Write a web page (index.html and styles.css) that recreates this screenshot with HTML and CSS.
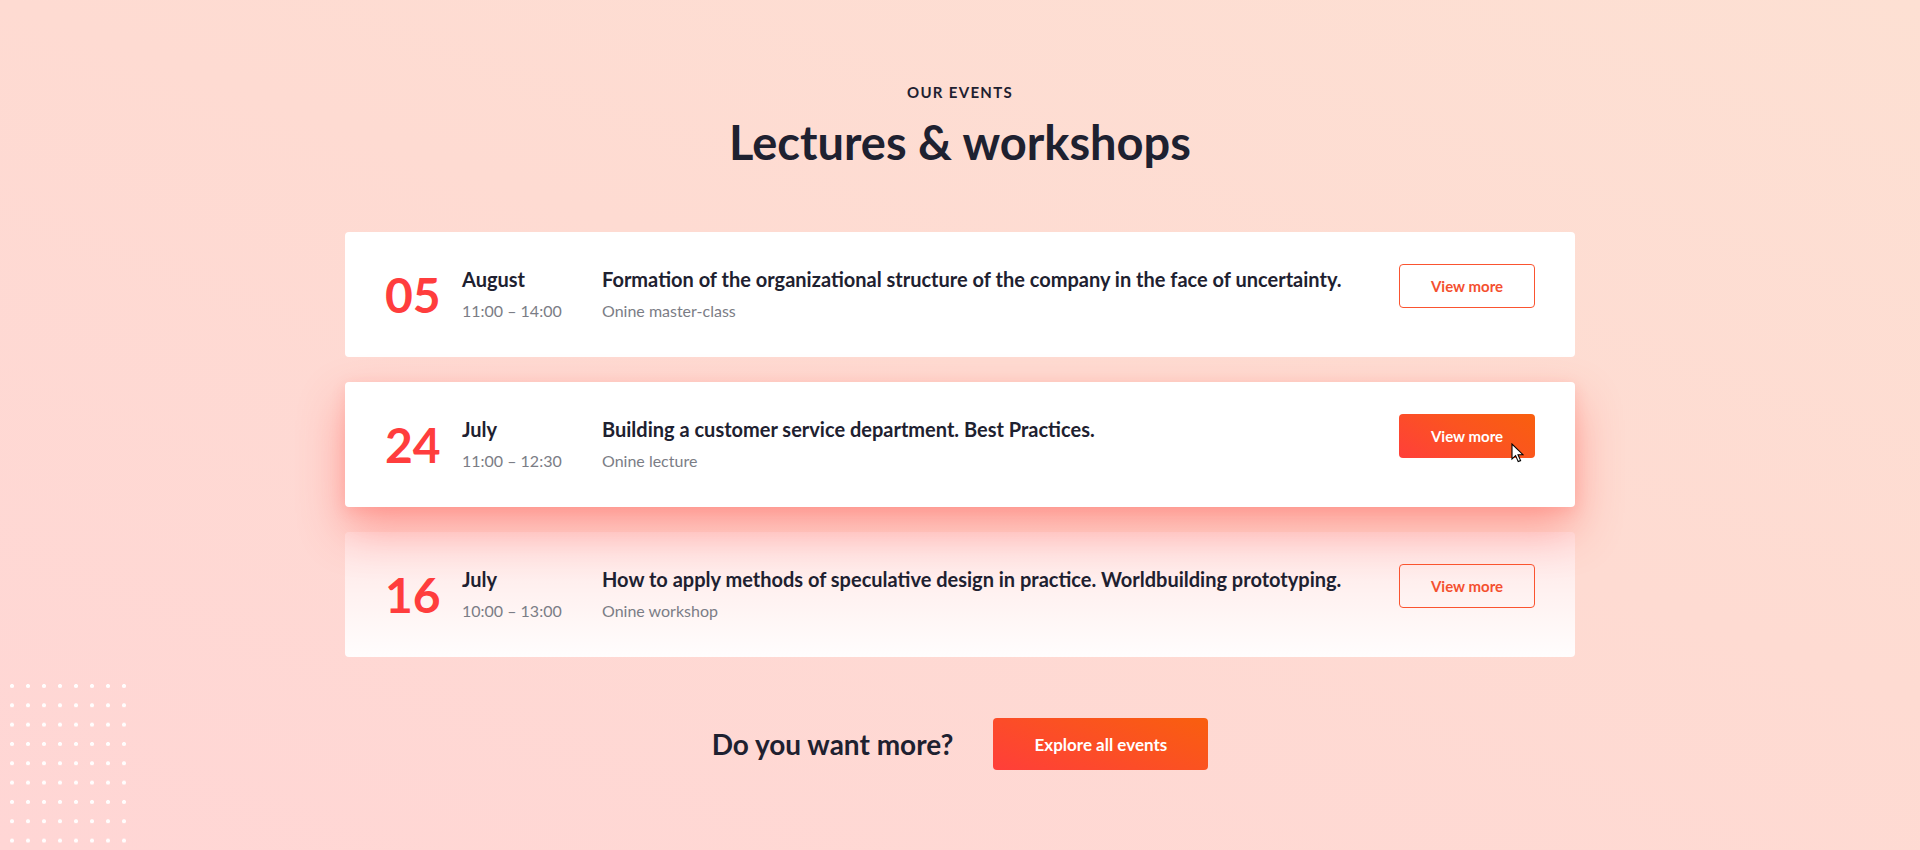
FILE: index.html
```html
<!DOCTYPE html>
<html lang="en">
<head>
<meta charset="utf-8">
<title>Lectures &amp; workshops</title>
<link rel="stylesheet" href="styles.css">
</head>
<body>
<div class="page">
  <div class="dots" aria-hidden="true"></div>
  <section class="events">
    <p class="eyebrow">OUR EVENTS</p>
    <h1 class="heading">Lectures &amp; workshops</h1>

    <div class="list">
      <article class="card">
        <div class="day">05</div>
        <div class="when">
          <div class="month">August</div>
          <div class="meta">11:00 – 14:00</div>
        </div>
        <div class="info">
          <div class="title">Formation of the organizational structure of the company in the face of uncertainty.</div>
          <div class="meta">Onine master-class</div>
        </div>
        <a class="btn btn-outline" href="#">View more</a>
      </article>

      <article class="card card-active">
        <div class="day">24</div>
        <div class="when">
          <div class="month">July</div>
          <div class="meta">11:00 – 12:30</div>
        </div>
        <div class="info">
          <div class="title">Building a customer service department. Best Practices.</div>
          <div class="meta">Onine lecture</div>
        </div>
        <a class="btn btn-filled" href="#">View more
          <svg class="cursor" width="13" height="20" viewBox="0 0 13 20" aria-hidden="true">
            <path d="M1 1 L1 16 L4.6 12.6 L7.2 18.6 L9.6 17.6 L7 11.7 L12 11.7 Z" fill="#fff" stroke="#000" stroke-width="1.1" stroke-linejoin="miter"/>
          </svg>
        </a>
      </article>

      <article class="card card-faded">
        <div class="day">16</div>
        <div class="when">
          <div class="month">July</div>
          <div class="meta">10:00 – 13:00</div>
        </div>
        <div class="info">
          <div class="title">How to apply methods of speculative design in practice. Worldbuilding prototyping.</div>
          <div class="meta">Onine workshop</div>
        </div>
        <a class="btn btn-outline" href="#">View more</a>
      </article>
    </div>

    <div class="more">
      <span class="more-text">Do you want more?</span>
      <a class="btn-explore" href="#">Explore all events</a>
    </div>
  </section>
</div>
</body>
</html>
```

FILE: styles.css
```css
html, body {
  margin: 0;
  padding: 0;
}

body {
  font-family: Lato, "Open Sans", "Liberation Sans", sans-serif;
  color: #1e2130;
  background: #fddbd2;
}

.page {
  position: relative;
  min-height: 850px;
  overflow: hidden;
  background: linear-gradient(200deg, #fde0d3 0%, #fedbd2 45%, #ffd6d5 100%);
}

.dots {
  position: absolute;
  left: 10px;
  top: 684px;
  width: 128px;
  height: 180px;
  background-image: radial-gradient(circle at 2px 2px, rgba(255,255,255,0.95) 1.8px, transparent 2.3px);
  background-size: 16px 19.33px;
}

.events {
  position: relative;
  width: 1230px;
  margin: 0 auto;
  padding-top: 82px;
  text-align: center;
}

.eyebrow {
  margin: 0;
  font-size: 15px;
  line-height: 20px;
  font-weight: 700;
  letter-spacing: 1.3px;
  color: #1e2130;
}

.heading {
  margin: 12px 0 0;
  font-size: 47px;
  line-height: 56px;
  font-weight: 700;
  color: #1e2130;
}

.list {
  margin-top: 62px;
  display: flex;
  flex-direction: column;
  gap: 25px;
  text-align: left;
}

.card {
  display: flex;
  align-items: flex-start;
  padding: 33px 40px 34px;
  background: #fff;
  border-radius: 4px;
}

.card .btn {
  margin-top: -1px;
}

.card-active {
  position: relative;
  z-index: 2;
  box-shadow: 0 22px 46px rgba(255, 85, 75, 0.45), 0 4px 14px rgba(255, 100, 90, 0.18);
}

.card-faded {
  background: linear-gradient(180deg, #ffe3e2 0%, #fff2f1 50%, #fffdfd 100%);
}

.day {
  flex: 0 0 77px;
  margin-top: 6px;
  font-size: 48px;
  line-height: 48px;
  font-weight: 700;
  color: #ff3d3d;
}

.when {
  flex: 0 0 140px;
}

.info {
  flex: 1 1 auto;
}

.month,
.title {
  font-size: 20px;
  line-height: 28px;
  font-weight: 700;
  color: #1e2130;
}

.meta {
  margin-top: 6px;
  font-size: 16px;
  line-height: 24px;
  font-weight: 400;
  color: #7b7d86;
}

.btn {
  position: relative;
  flex: 0 0 auto;
  box-sizing: border-box;
  width: 136px;
  height: 44px;
  border-radius: 4px;
  display: flex;
  align-items: center;
  justify-content: center;
  font-size: 15px;
  font-weight: 700;
  text-decoration: none;
}

.btn-outline {
  border: 1px solid #fa5430;
  color: #f4502f;
  background: transparent;
}

.btn-filled {
  color: #fff;
  background: linear-gradient(30deg, #ff3f3a 0%, #fb5420 55%, #f95f0e 100%);
}

.cursor {
  position: absolute;
  left: 112px;
  top: 29px;
}

.more {
  margin-top: 61px;
  display: flex;
  justify-content: center;
  align-items: center;
  gap: 40px;
}

.more-text {
  font-size: 28px;
  font-weight: 700;
  color: #1e2130;
}

.btn-explore {
  display: flex;
  align-items: center;
  justify-content: center;
  width: 215px;
  height: 52px;
  border-radius: 4px;
  font-size: 17px;
  font-weight: 700;
  color: #fff;
  text-decoration: none;
  background: linear-gradient(20deg, #ff3e3a 0%, #fb5122 55%, #f95f0e 100%);
}
```
